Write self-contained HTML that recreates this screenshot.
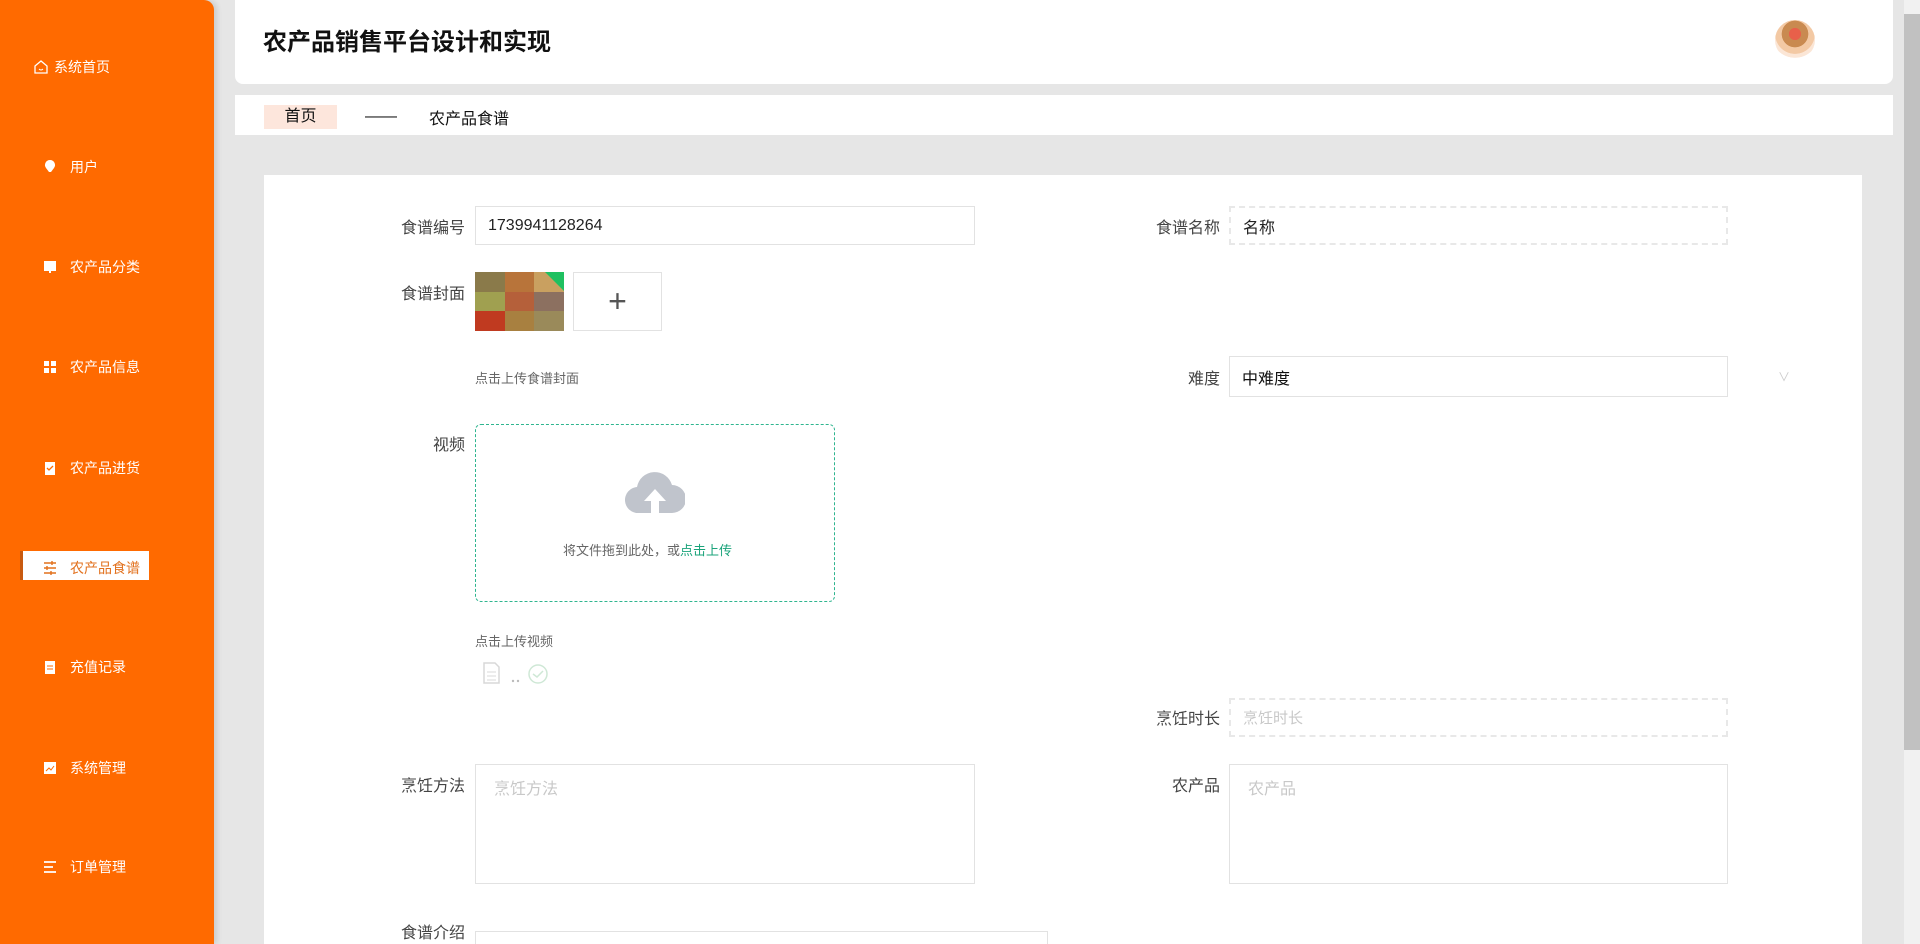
<!DOCTYPE html>
<html><head><meta charset="utf-8">
<style>
*{box-sizing:border-box;margin:0;padding:0}
html,body{width:1920px;height:944px;overflow:hidden}
body{background:#e6e6e6;font-family:"Liberation Sans","Noto Sans CJK SC",sans-serif;position:relative}
.side{position:absolute;left:0;top:0;width:214px;height:944px;background:#ff6a00;border-radius:0 10px 0 0;box-shadow:3px 0 6px rgba(0,0,0,.12)}
.mi{position:absolute;left:42px;color:#fff;font-size:14px;display:flex;align-items:center;height:20px}
.mi .ic{width:16px;height:16px;margin-right:12px;display:inline-block}
.act{position:absolute;left:20px;top:551px;width:129px;height:29px;background:#fff;border-left:3px solid #c85a10}
.hdr{position:absolute;left:235px;top:0;width:1658px;height:84px;background:#fff;border-radius:0 0 8px 8px}
.hdr h1{position:absolute;left:28px;top:22px;font-size:24px;font-weight:bold;color:#111}
.av{position:absolute;left:1540px;top:20px;width:40px;height:40px;border-radius:50%;background:radial-gradient(circle at 50% 35%,#e8604a 0 18%,#c98a50 19% 40%,#f3c9a4 41% 60%,#fbe6d6 61% 72%,#fff 73%)}
.bc{position:absolute;left:235px;top:95px;width:1658px;height:40px;background:#fff}
.bc .home{position:absolute;left:29px;top:10px;width:73px;height:24px;background:#fde6dc;text-align:center;line-height:24px;font-size:16px;color:#111}
.bc .dash{position:absolute;left:130px;top:13px;font-size:16px;color:#111}
.bc .cur{position:absolute;left:194px;top:10px;font-size:16px;color:#111}
.card{position:absolute;left:264px;top:175px;width:1598px;height:769px;background:#fff}
.lbl{position:absolute;font-size:16px;color:#444;text-align:right;width:120px}
.inp{position:absolute;border:1px solid #e2e2e2;background:#fff;font-size:16px;color:#222;padding-left:12px;display:flex;align-items:center}
.dsh{border:2px dashed #e8e8e8}
.ph{color:#c8c8c8}
.sb{position:absolute;left:1904px;top:0;width:16px;height:944px;background:#f1f1f1}
.sb i{position:absolute;left:0;top:14px;width:16px;height:736px;background:#c1c1c1}
.cov{position:absolute;left:475px;top:272px;width:89px;height:59px;display:grid;grid-template-columns:repeat(3,1fr);grid-template-rows:repeat(3,1fr);overflow:hidden}
</style></head><body>
<div class="side">
  <div class="act"></div>
  <div class="mi" style="left:33px;top:57px"><svg class="ic" style="margin-right:5px" viewBox="0 0 16 16"><path d="M2 7L8 2l6 5v7H2z" fill="none" stroke="#fff" stroke-width="1.3"/><path d="M6 10q2 2 4 0" fill="none" stroke="#fff"/></svg>系统首页</div>
  <div class="mi" style="top:157px"><svg class="ic" viewBox="0 0 16 16"><path d="M8 1a5 5 0 0 1 4 8l-3 4H7L4 9a5 5 0 0 1 4-8z" fill="#fff"/></svg>用户</div>
  <div class="mi" style="top:257px"><svg class="ic" viewBox="0 0 16 16"><rect x="2" y="2" width="12" height="10" fill="#fff"/><rect x="7" y="12" width="2" height="2" fill="#fff"/></svg>农产品分类</div>
  <div class="mi" style="top:357px"><svg class="ic" viewBox="0 0 16 16"><rect x="2" y="2" width="5" height="5" fill="#fff"/><rect x="9" y="2" width="5" height="5" fill="#fff"/><rect x="2" y="9" width="5" height="5" fill="#fff"/><rect x="9" y="9" width="5" height="5" fill="#fff"/></svg>农产品信息</div>
  <div class="mi" style="top:458px"><svg class="ic" viewBox="0 0 16 16"><rect x="3" y="2" width="10" height="13" fill="#fff"/><path d="M5 8l2 2 4-4" stroke="#ff6a00" fill="none" stroke-width="1.3"/></svg>农产品进货</div>
  <div class="mi" style="top:558px;color:#e2701c"><svg class="ic" viewBox="0 0 16 16"><path d="M2 3h12M2 8h12M2 13h12" stroke="#e2701c" stroke-width="1.4"/><path d="M10 1v4M5 6v4M9 11v4" stroke="#e2701c" stroke-width="1.4"/></svg>农产品食谱</div>
  <div class="mi" style="top:657px"><svg class="ic" viewBox="0 0 16 16"><rect x="3" y="2" width="10" height="13" fill="#fff"/><path d="M5 7h6M5 10h6" stroke="#ff6a00"/></svg>充值记录</div>
  <div class="mi" style="top:758px"><svg class="ic" viewBox="0 0 16 16"><rect x="2" y="2" width="12" height="12" fill="#fff"/><path d="M4 11l3-3 2 2 3-4" stroke="#ff6a00" fill="none"/></svg>系统管理</div>
  <div class="mi" style="top:857px"><svg class="ic" viewBox="0 0 16 16"><path d="M2 3h12M2 8h9M2 13h12" stroke="#fff" stroke-width="1.8"/></svg>订单管理</div>
</div>
<div class="hdr"><h1>农产品销售平台设计和实现</h1><div class="av"></div></div>
<div class="bc"><div class="home">首页</div><div class="dash">——</div><div class="cur">农产品食谱</div></div>
<div class="card"></div>

<div class="lbl" style="left:345px;top:214px">食谱编号</div>
<div class="inp" style="left:475px;top:206px;width:500px;height:39px">1739941128264</div>
<div class="lbl" style="left:1100px;top:214px">食谱名称</div>
<div class="inp dsh" style="left:1229px;top:206px;width:499px;height:39px">名称</div>

<div class="lbl" style="left:345px;top:280px">食谱封面</div>
<div class="cov">
<i style="background:#8a7a4a"></i><i style="background:#b8743a"></i><i style="background:#c9a060"></i>
<i style="background:#a0a050"></i><i style="background:#b5603a"></i><i style="background:#8c7060"></i>
<i style="background:#c03a20"></i><i style="background:#a88040"></i><i style="background:#9a8a5a"></i>
</div>
<div style="position:absolute;left:545px;top:272px;width:0;height:0;border-left:19px solid transparent;border-top:19px solid #1fc060"></div>
<div style="position:absolute;left:573px;top:272px;width:89px;height:59px;border:1px solid #e2e2e2;text-align:center;line-height:56px;font-size:32px;color:#555;font-weight:300">+</div>
<div style="position:absolute;left:475px;top:368px;font-size:13px;color:#666">点击上传食谱封面</div>

<div class="lbl" style="left:1100px;top:365px">难度</div>
<div class="inp" style="left:1229px;top:356px;width:499px;height:41px;color:#111">中难度</div>
<div style="position:absolute;left:1778px;top:368px;font-size:12px;color:#ccc">∨</div>

<div class="lbl" style="left:345px;top:431px">视频</div>
<div style="position:absolute;left:475px;top:424px;width:360px;height:178px;border:1px dashed #2fb58f;border-radius:6px"></div>
<svg style="position:absolute;left:625px;top:467px" width="60" height="46" viewBox="0 0 60 46"><path d="M14 46A13 13 0 0 1 12 20 18 18 0 0 1 47 18 14 14 0 0 1 47 46z" fill="#c0c4cc"/><path d="M30 22l-11 12h7v12h8V34h7z" fill="#fff"/></svg>
<div style="position:absolute;left:563px;top:540px;font-size:13px;color:#666">将文件拖到此处，或<span style="color:#1aa37a">点击上传</span></div>
<div style="position:absolute;left:475px;top:631px;font-size:13px;color:#666">点击上传视频</div>
<svg style="position:absolute;left:482px;top:662px" width="70" height="22" viewBox="0 0 70 22"><path d="M2 1h11l4 4v16H2z" fill="none" stroke="#d8d8d8" stroke-width="1.5"/><path d="M5 10h9M5 14h9M5 18h9" stroke="#d8d8d8"/><circle cx="31" cy="19" r="1.2" fill="#bbb"/><circle cx="36" cy="19" r="1.2" fill="#bbb"/><circle cx="56" cy="12" r="9" fill="none" stroke="#cfe8d6" stroke-width="1.5"/><path d="M51 12l4 3 6-6" fill="none" stroke="#cfe8d6" stroke-width="1.5"/></svg>

<div class="lbl" style="left:1100px;top:705px">烹饪时长</div>
<div class="inp dsh ph" style="left:1229px;top:698px;width:499px;height:39px;font-size:15px">烹饪时长</div>

<div class="lbl" style="left:345px;top:772px">烹饪方法</div>
<div class="inp ph" style="left:475px;top:764px;width:500px;height:120px;align-items:flex-start;padding:10px 0 0 18px">烹饪方法</div>
<div class="lbl" style="left:1100px;top:772px">农产品</div>
<div class="inp ph" style="left:1229px;top:764px;width:499px;height:120px;align-items:flex-start;padding:10px 0 0 18px">农产品</div>

<div class="lbl" style="left:345px;top:919px">食谱介绍</div>
<div class="inp" style="left:475px;top:931px;width:573px;height:13px;border-bottom:none"></div>

<div class="sb"><i></i></div>
</body></html>
